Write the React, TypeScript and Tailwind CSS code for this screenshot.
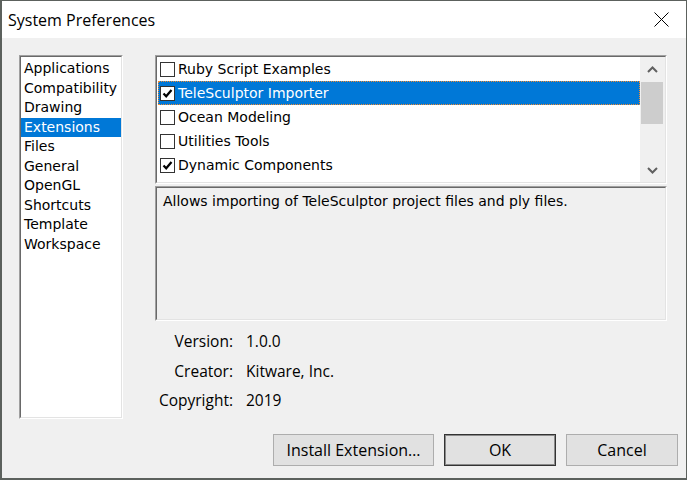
import { useState } from "react";

// System Preferences ダイアログ（Extensions タブ）

const categories = [
  "Applications",
  "Compatibility",
  "Drawing",
  "Extensions",
  "Files",
  "General",
  "OpenGL",
  "Shortcuts",
  "Template",
  "Workspace",
];

const extensions = [
  { name: "Ruby Script Examples", on: false },
  { name: "TeleSculptor Importer", on: true },
  { name: "Ocean Modeling", on: false },
  { name: "Utilities Tools", on: false },
  { name: "Dynamic Components", on: true },
  { name: "Sandbox Tools", on: false },
];

function Check({ on }: { on: boolean }) {
  return (
    <span className="flex h-[15px] w-[15px] shrink-0 items-center justify-center border border-[#333333] bg-white">
      {on && (
        <svg width="13" height="13" viewBox="0 0 13 13">
          <path d="M2.5 6.5 L5.2 9.3 L10.5 3" fill="none" stroke="#000" strokeWidth="2.2" />
        </svg>
      )}
    </span>
  );
}

function Sunken({ className, inner, children }: { className: string; inner: string; children: React.ReactNode }) {
  return (
    <div className={`border border-t-[#a0a0a0] border-l-[#a0a0a0] border-r-white border-b-white ${className}`}>
      <div className={`h-full border border-t-[#696969] border-l-[#696969] border-r-[#e3e3e3] border-b-[#e3e3e3] ${inner}`}>
        {children}
      </div>
    </div>
  );
}

export default function App() {
  const [category, setCategory] = useState("Extensions");
  const [selected, setSelected] = useState(1);
  const [items, setItems] = useState(extensions);

  const toggle = (index: number) =>
    setItems((prev) => prev.map((item, i) => (i === index ? { ...item, on: !item.on } : item)));

  return (
    <div className="flex h-[480px] w-[687px] flex-col overflow-hidden border-t border-r border-b-2 border-l-2 border-[#5c615d] bg-[#f0f0f0] text-black">
      <div className="flex h-[37px] shrink-0 items-center justify-between bg-white pr-[17px] pl-[6px]">
        <span className="font-['Open_Sans',sans-serif] text-[16px]">System Preferences</span>
        <svg width="15" height="15" viewBox="0 0 15 15">
          <path d="M0.5 0.5 L14.5 14.5 M14.5 0.5 L0.5 14.5" stroke="#000" strokeWidth="1" />
        </svg>
      </div>

      <div className="flex flex-1 flex-col pt-[17px] pl-[17px]">
        <div className="flex h-[364px] gap-[32px]">
          <Sunken className="h-full w-[104px]" inner="bg-white pt-[2px]">
            <div className="font-['DejaVu_Sans',sans-serif] text-[14px] leading-[19.5px]">
              {categories.map((name) => (
                <div
                  key={name}
                  onClick={() => setCategory(name)}
                  className={
                    name === category ? "bg-[#0078d7] pl-[3px] text-white" : "pl-[3px]"
                  }
                >
                  {name}
                </div>
              ))}
            </div>
          </Sunken>

          <div className="flex w-[512px] flex-col">
            <Sunken className="h-[129px]" inner="flex bg-white overflow-hidden">
              <div className="flex-1 overflow-hidden font-['DejaVu_Sans',sans-serif] text-[14px]">
                {items.map((item, i) => (
                  <div
                    key={item.name}
                    onClick={() => setSelected(i)}
                    className={
                      i === selected
                        ? "ml-[1px] flex h-[24px] items-center gap-[3px] border border-dotted border-[#f28b30] bg-[#0078d7] pl-[1px] text-white"
                        : "flex h-[24px] items-center gap-[3px] pl-[3px]"
                    }
                  >
                    <span onClick={() => toggle(i)}>
                      <Check on={item.on} />
                    </span>
                    <span>{item.name}</span>
                  </div>
                ))}
              </div>
              <div className="flex w-[25px] shrink-0 flex-col bg-[#f0f0f0]">
                <div className="flex h-[25px] items-center justify-center pr-[1px]">
                  <svg width="11" height="7" viewBox="0 0 11 7">
                    <path d="M1 6 L5.5 1.5 L10 6" fill="none" stroke="#606060" strokeWidth="2" />
                  </svg>
                </div>
                <div className="mr-[2px] ml-[1px] h-[42px] bg-[#cdcdcd]" />
                <div className="flex-1" />
                <div className="flex h-[24px] items-center justify-center pr-[1px]">
                  <svg width="11" height="7" viewBox="0 0 11 7">
                    <path d="M1 1 L5.5 5.5 L10 1" fill="none" stroke="#606060" strokeWidth="2" />
                  </svg>
                </div>
              </div>
            </Sunken>

            <Sunken className="mt-[2px] h-[135px]" inner="pt-[4px] pl-[6px]">
              <div className="font-['DejaVu_Sans',sans-serif] text-[14px] leading-[18px]">
                Allows importing of TeleSculptor project files and ply files.
              </div>
            </Sunken>

            <div className="mt-[6px] grid grid-cols-[78px_auto] gap-x-[13px] font-['Open_Sans',sans-serif] text-[15.5px] leading-[29.5px]">
              <span className="text-right">Version:</span>
              <span>1.0.0</span>
              <span className="text-right">Creator:</span>
              <span>Kitware, Inc.</span>
              <span className="text-right">Copyright:</span>
              <span>2019</span>
            </div>
          </div>
        </div>

        <div className="mt-[15px] flex justify-end gap-[10px] pr-[8px] font-['Open_Sans',sans-serif] text-[16px]">
          <button type="button" className="h-[32px] w-[161px] border border-[#adadad] bg-[#e1e1e1]">
            Install Extension…
          </button>
          <button
            type="button"
            className="h-[32px] w-[112px] border border-[#333333] bg-[#e1e1e1] shadow-[inset_0_0_0_1px_#8a8a8a]"
          >
            OK
          </button>
          <button type="button" className="h-[32px] w-[112px] border border-[#adadad] bg-[#e1e1e1]">
            Cancel
          </button>
        </div>
      </div>
    </div>
  );
}
